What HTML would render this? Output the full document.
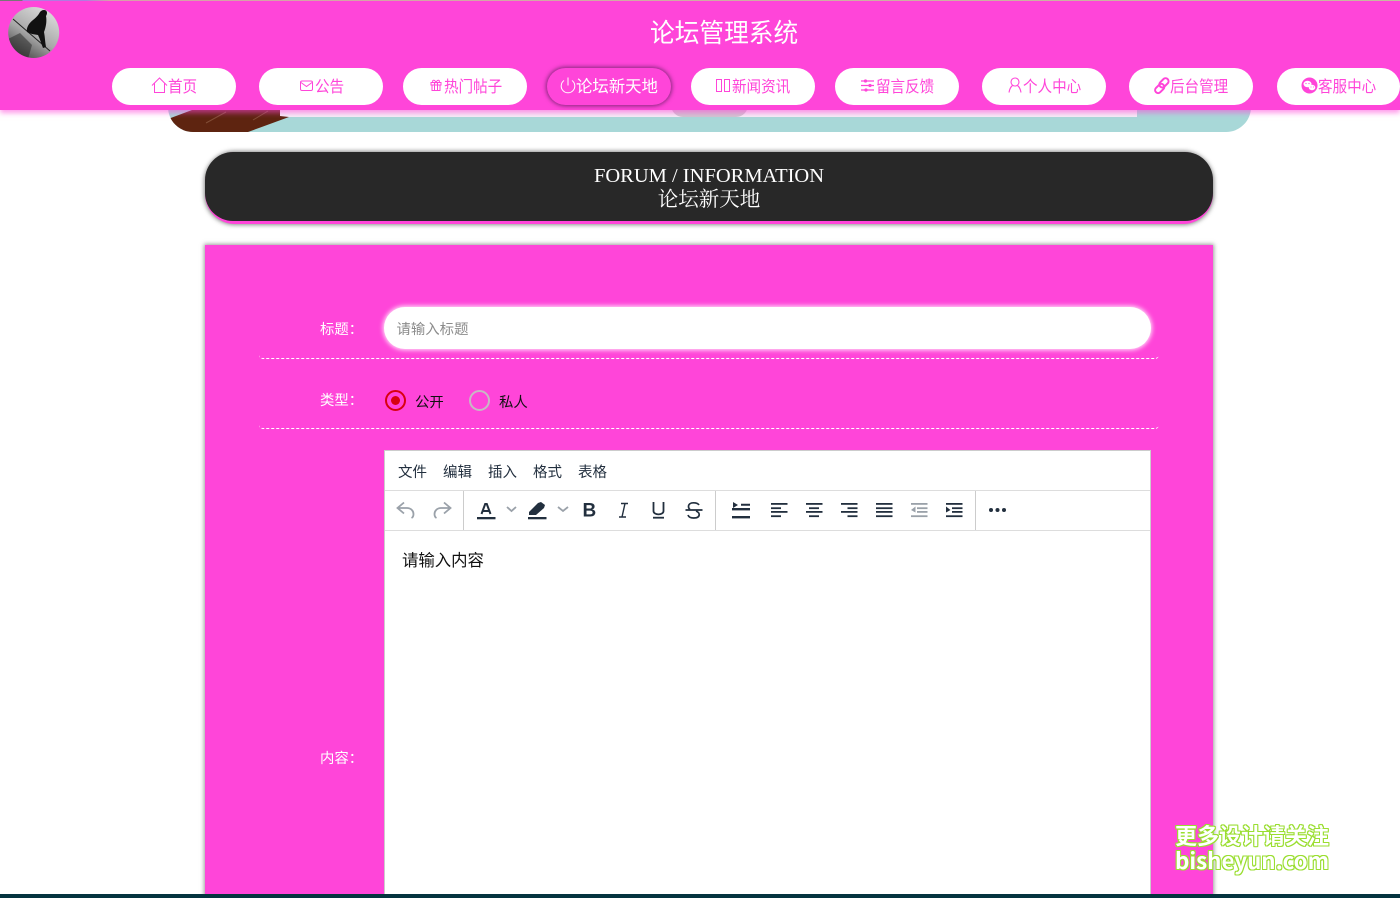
<!DOCTYPE html>
<html lang="zh">
<head>
<meta charset="utf-8">
<title>论坛管理系统</title>
<style>
html,body{margin:0;padding:0;background:#fff;width:1400px;height:898px;overflow:hidden}
body{position:relative;font-family:"Liberation Sans","Noto Sans CJK SC",sans-serif}
#wrap{position:absolute;left:0;top:0;width:1400px;height:898px;overflow:hidden}
.a{position:absolute;white-space:nowrap}
.nav{position:absolute;top:68px;height:37px;width:123.5px;border-radius:19px;background:#fff;color:#ff45d9;font-size:16px;line-height:39px}
.nav span{position:absolute;top:0;white-space:nowrap;transform:scaleX(.91);transform-origin:0 50%}
.nav svg{position:absolute;top:0;left:0}
.nav.on{background:#ff45d9;color:#fff;box-shadow:0 0 4px 1px rgba(90,30,90,.75)}
.nav.on span{transform:none;font-size:16.4px}
.lbl{position:absolute;color:#fff;font-size:14.4px;line-height:20px;white-space:nowrap}
.dash{position:absolute;left:259px;width:900px;height:12px;border-bottom:1px dashed #fff;border-radius:0 0 4px 4px;box-sizing:border-box}
.m{position:absolute;top:463px;font-size:14.5px;line-height:20px;color:#222f3e}
</style>
</head>
<body>
<div id="wrap">
<!-- banner -->
<div class="a" style="left:168px;top:90px;width:1083px;height:42px;background:#a8d8d8;border-radius:0 0 25px 25px;overflow:hidden">
  <div class="a" style="left:112px;top:0;width:857px;height:27px;background:#f4eef6"></div>
  <div class="a" style="left:503px;top:0;width:77px;height:27px;background:#cfc6d0;border-radius:0 0 12px 12px"></div>
  <svg class="a" style="left:0;top:0" width="130" height="42"><path d="M0 29L24 20H112V26L121 27L80 42H14Z" fill="#5e2410"/><path d="M38 33L58 22M85 30L100 21" stroke="#9a6a50" stroke-width="1" opacity=".6"/></svg>
</div>

<!-- header -->
<div class="a" style="left:0;top:0;width:1400px;height:110px;background:#ff45d9;box-shadow:0 3px 5px rgba(255,69,217,.55)"></div>
<div class="a" style="left:0;top:0;width:1400px;height:1px;background:linear-gradient(90deg,#777 0,#777 22px,#b07ae0 23px,#b07ae0 85px,#d8a0a8 110px,#c8b8a0 100%)"></div>
<svg class="a" style="left:8px;top:7px" width="52" height="52" viewBox="0 0 52 52">
  <defs>
    <linearGradient id="av" x1="0.8" y1="0" x2="0.2" y2="1"><stop offset="0" stop-color="#e0e0e0"/><stop offset=".55" stop-color="#a8a8a8"/><stop offset="1" stop-color="#404040"/></linearGradient>
    <clipPath id="avc"><circle cx="25.7" cy="25.5" r="25.5"/></clipPath>
  </defs>
  <g clip-path="url(#avc)">
    <rect width="52" height="52" fill="url(#av)"/>
    <path d="M5 12L42 44" stroke="#222" stroke-width="1"/>
    <path d="M36 3C39 3 40 6 38 9C39 14 38 20 36 25C37 30 37 35 38 40L35 41C33 36 32 32 30 28L24 27L19 25C18 21 21 16 25 13C29 10 31 7 32 5C33 4 34 3 36 3Z" fill="#111"/>
    <path d="M0 32L12 26L24 38L20 52H4Z" fill="#222" opacity=".5"/>
  </g>
</svg>
<div class="a" style="left:650px;top:14px;font-size:26px;line-height:38px;color:#fff;transform:scaleX(.95);transform-origin:0 50%">论坛管理系统</div>

<div class="nav" style="left:112px"><svg width="124" height="37" fill="none" stroke="#ff45d9" stroke-width="1"><path d="M40 17.500L47.500 10L55 17.500M42.500 15.500V24.500H52.500V15.500"/></svg><span style="left:56px">首页</span></div>
<div class="nav" style="left:259px"><svg width="124" height="37" fill="none" stroke="#ff45d9" stroke-width="1"><rect x="41.500" y="13" width="12" height="9.500" rx="1.500"/><path d="M42 14.500L47.500 18.500L53 14.500"/></svg><span style="left:56px">公告</span></div>
<div class="nav" style="left:403px"><svg width="124" height="37" fill="none" stroke="#ff45d9" stroke-width="1"><path d="M28 14.500H38V17H28ZM29 17V22.500H37V17M31.500 14.500V22.500M34.500 14.500V22.500M30 14.500C28.500 12 31.500 11 33 14.500C34.500 11 37.500 12 36 14.500"/></svg><span style="left:41px">热门帖子</span></div>
<div class="nav on" style="left:547px"><svg width="124" height="37" fill="none" stroke="#fff" stroke-width="1"><path d="M17 12.500A6.800 6.800 0 1 0 25 12.500M21 9.500V17.500"/></svg><span style="left:29px">论坛新天地</span></div>
<div class="nav" style="left:691px"><svg width="124" height="37" fill="none" stroke="#ff45d9" stroke-width="1"><rect x="25.500" y="11.500" width="5" height="12"/><rect x="33.500" y="11.500" width="5" height="12"/></svg><span style="left:41px">新闻资讯</span></div>
<div class="nav" style="left:835px"><svg width="124" height="37" fill="#ff45d9" stroke="#ff45d9" stroke-width="1.200"><path d="M26 13H39M26 17.500H39M26 22H39" fill="none"/><circle cx="30.500" cy="13" r="1"/><circle cx="35" cy="17.500" r="1"/><circle cx="31" cy="22" r="1"/></svg><span style="left:41px">留言反馈</span></div>
<div class="nav" style="left:982px"><svg width="124" height="37" fill="none" stroke="#ff45d9" stroke-width="1.100"><circle cx="33" cy="14" r="4"/><path d="M30.500 17.500C28.500 19 27.500 21.500 27 24.500M35.500 17.500C37.500 19 38.500 21.500 39 24.500"/></svg><span style="left:41px">个人中心</span></div>
<div class="nav" style="left:1129px"><svg width="124" height="37" fill="none" stroke="#ff45d9" stroke-width="2"><g transform="rotate(-45 33 17.500)"><rect x="24" y="15" width="10.500" height="6" rx="3"/><rect x="31" y="14" width="10.500" height="6" rx="3"/></g></svg><span style="left:41px">后台管理</span></div>
<div class="nav" style="left:1276.500px"><svg width="124" height="37"><circle cx="32.500" cy="17.500" r="8" fill="#ff45d9"/><ellipse cx="30.500" cy="16" rx="4" ry="3.200" fill="#fff"/><ellipse cx="35" cy="19.500" rx="3.300" ry="2.700" fill="#fff"/><g fill="#ff45d9"><circle cx="29" cy="15.500" r=".6"/><circle cx="32" cy="15.500" r=".6"/><circle cx="34" cy="19" r=".5"/><circle cx="36.500" cy="19" r=".5"/></g></svg><span style="left:41px">客服中心</span></div>

<!-- heading -->
<div class="a" style="left:205px;top:152px;width:1008px;height:72px;background:#ff45d9;border-radius:30px;box-shadow:0 0 4px 1px rgba(60,60,60,.6)"></div>
<div class="a" style="left:205px;top:152px;width:1008px;height:69px;box-sizing:border-box;background:#282828;border-radius:28px;color:#fff;text-align:center;font-family:'Liberation Serif','Noto Serif CJK SC',serif;font-size:20.5px;line-height:24px;padding-top:12px;white-space:normal">
  FORUM / INFORMATION<br>论坛新天地
</div>

<!-- form -->
<div class="a" style="left:205px;top:245px;width:1008px;height:653px;background:#ff45d9;box-shadow:0 0 4px 1px rgba(60,60,60,.5)"></div>

<div class="lbl" style="left:320px;top:320px">标题：</div>
<div class="a" style="left:384px;top:307px;width:767px;height:42px;background:#fff;border-radius:21px;box-shadow:0 0 5px 1px rgba(255,255,255,.9)"></div>
<div class="a" style="left:396.500px;top:320px;font-size:14.4px;line-height:20px;color:#8c8c8c">请输入标题</div>
<div class="dash" style="top:347px"></div>

<div class="lbl" style="left:320px;top:391px">类型：</div>
<div class="a" style="left:385px;top:390px;width:21px;height:21px;box-sizing:border-box;border:2px solid #d80010;border-radius:50%"></div>
<div class="a" style="left:391px;top:396px;width:9px;height:9px;border-radius:50%;background:#d80010"></div>
<div class="a" style="left:415px;top:393px;font-size:14.4px;line-height:20px;color:#111">公开</div>
<div class="a" style="left:469px;top:390px;width:21px;height:21px;box-sizing:border-box;border:2px solid #c8b8c4;border-radius:50%"></div>
<div class="a" style="left:499px;top:393px;font-size:14.4px;line-height:20px;color:#111">私人</div>
<div class="dash" style="top:417px"></div>

<div class="lbl" style="left:320px;top:749px">内容：</div>

<!-- editor -->
<div class="a" style="left:384px;top:450px;width:767px;height:448px;box-sizing:border-box;background:#fff;border:1px solid #ccc;border-bottom:0"></div>
<div class="a" style="left:385px;top:490px;width:765px;height:1px;background:#ddd"></div>
<div class="a" style="left:385px;top:530px;width:765px;height:1px;background:#ddd"></div>
<div class="a" style="left:463px;top:491px;width:1px;height:39px;background:#ccc"></div>
<div class="a" style="left:715px;top:491px;width:1px;height:39px;background:#ccc"></div>
<div class="a" style="left:975px;top:491px;width:1px;height:39px;background:#ccc"></div>
<div class="m" style="left:398px">文件</div>
<div class="m" style="left:443px">编辑</div>
<div class="m" style="left:488px">插入</div>
<div class="m" style="left:533px">格式</div>
<div class="m" style="left:578px">表格</div>
<div class="a" style="left:402px;top:550px;font-size:16.4px;line-height:22px;color:#111">请输入内容</div>

<svg class="a" style="left:385px;top:491px" width="765" height="38" fill="none">
  <g stroke="#9aa1a9" stroke-width="1.800">
    <path d="M19 11.500L12.500 17L19 22.500M13 17H22C26 17 28.500 20 28.500 23C28.500 25 27.500 26.500 26.500 27"/>
    <path d="M59 11.500L65.500 17L59 22.500M65 17H56C52 17 49.500 20 49.500 23C49.500 25 50.500 26.500 51.500 27"/>
    <path d="M122 16L126.500 20L131 16M173 16L178 20L183 16"/>
  </g>
  <path d="M96.500 23L100.200 13H101.800L105.500 23M98 20H104" stroke="#222f3e" stroke-width="2"/>
  <rect x="92" y="26" width="18.500" height="2.300" fill="#222f3e"/>
  <rect x="143" y="26" width="18.500" height="2.300" fill="#222f3e"/>
  <path d="M144 21L153 12L156 11L160 14L159 17L151 24H144Z" fill="#222f3e"/>
  <text x="197.500" y="25.500" font-family="Liberation Sans" font-weight="700" font-size="19" fill="#222f3e">B</text>
  <path d="M236 12.500H243M234 26H241M240 12.500L237 26" stroke="#222f3e" stroke-width="1.400"/>
  <path d="M268.500 11V20C268.500 24.500 278.500 24.500 278.500 20V11" stroke="#222f3e" stroke-width="1.800"/><rect x="268" y="25.800" width="11" height="1.800" fill="#222f3e"/>
  <path d="M314 14C313 12.300 311 11.800 308.500 11.800C305.500 11.800 303.500 13.300 303.500 15.500C303.500 16.700 304 17.800 305 18.500M311 20C313 20.800 314.200 22 314.200 23.500C314.200 25.800 312 27 308.700 27C305.800 27 303.700 26 303 24M300.500 19H317.500" stroke="#222f3e" stroke-width="1.700"/>
  <g fill="#222f3e">
    <path d="M348 11V17L353 14ZM356 12.700H365V14.700H356Z"/>
    <rect x="347" y="17" width="18" height="2.400"/><rect x="347" y="25" width="18" height="2.400"/>
    <rect x="386" y="12" width="16.500" height="1.800"/><rect x="386" y="16.300" width="10" height="1.800"/><rect x="386" y="20" width="16.500" height="1.800"/><rect x="386" y="24.300" width="10" height="1.800"/>
    <rect x="421" y="12" width="16.500" height="1.800"/><rect x="424" y="16.300" width="10" height="1.800"/><rect x="421" y="20" width="16.500" height="1.800"/><rect x="424" y="24.300" width="10" height="1.800"/>
    <rect x="456" y="12" width="16.500" height="1.800"/><rect x="462.500" y="16.300" width="10" height="1.800"/><rect x="456" y="20" width="16.500" height="1.800"/><rect x="462.500" y="24.300" width="10" height="1.800"/>
    <rect x="491" y="12" width="16.500" height="1.800"/><rect x="491" y="16.300" width="16.500" height="1.800"/><rect x="491" y="20" width="16.500" height="1.800"/><rect x="491" y="24.300" width="16.500" height="1.800"/>
    <g fill="#9aa1a9"><rect x="526" y="12" width="16.500" height="1.800"/><rect x="532" y="16.300" width="10.500" height="1.800"/><rect x="532" y="20" width="10.500" height="1.800"/><rect x="526" y="24.300" width="16.500" height="1.800"/><path d="M530.500 15.500V21.500L526 19Z"/></g>
    <rect x="561" y="12" width="16.500" height="1.800"/><rect x="567" y="16.300" width="10.500" height="1.800"/><rect x="567" y="20" width="10.500" height="1.800"/><rect x="561" y="24.300" width="16.500" height="1.800"/><path d="M561 15.500V21.500L565.500 19Z"/>
    <circle cx="606" cy="19" r="2"/><circle cx="612.500" cy="19" r="2"/><circle cx="619" cy="19" r="2"/>
  </g>
</svg>

<!-- watermark -->
<div class="a" style="left:1175px;top:819px;font-size:22px;line-height:32px;font-weight:700;color:#fff;font-family:'Noto Sans CJK SC',sans-serif;text-shadow:1px 0 #9ade30,-1px 0 #9ade30,0 1px #9ade30,0 -1px #9ade30,1px 1px #9ade30,-1px -1px #9ade30,1px -1px #9ade30,-1px 1px #9ade30">更多设计请关注</div>
<div class="a" style="left:1175px;top:844px;font-size:22.3px;line-height:32px;font-weight:700;color:#fff;font-family:'Noto Sans CJK SC',sans-serif;text-shadow:1px 0 #9ade30,-1px 0 #9ade30,0 1px #9ade30,0 -1px #9ade30,1px 1px #9ade30,-1px -1px #9ade30,1px -1px #9ade30,-1px 1px #9ade30">bisheyun.com</div>

<!-- bottom strip -->
<div class="a" style="left:0;top:894px;width:1400px;height:4px;background:#04343f"></div>
</div>
</body>
</html>
